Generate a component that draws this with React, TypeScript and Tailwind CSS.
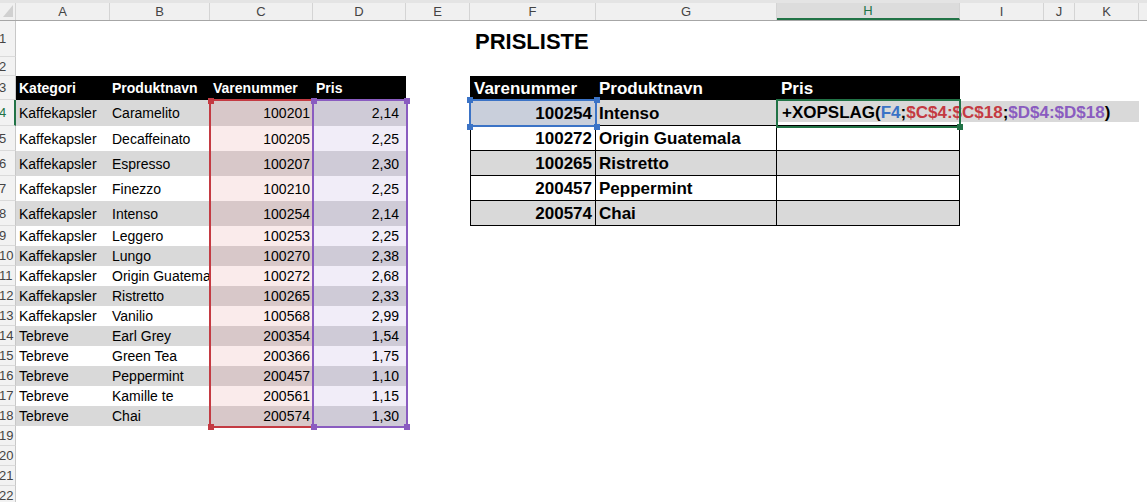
import React from "react";

type Col = { key: string; w: string };

const COLS: Col[] = [
  { key: "A", w: "w-[94px]" },
  { key: "B", w: "w-[100px]" },
  { key: "C", w: "w-[103px]" },
  { key: "D", w: "w-[93px]" },
  { key: "E", w: "w-[64px]" },
  { key: "F", w: "w-[126px]" },
  { key: "G", w: "w-[181px]" },
  { key: "H", w: "w-[183px]" },
  { key: "I", w: "w-[84px]" },
  { key: "J", w: "w-[31px]" },
  { key: "K", w: "w-[64px]" },
  { key: "L", w: "w-[120px]" },
];

const ROW_HEIGHTS = [
  "h-[36px]",
  "h-[19px]",
  "h-[24px]",
  "h-[26px]",
  "h-[25px]",
  "h-[25px]",
  "h-[25px]",
  "h-[25px]",
  ...Array.from({ length: 14 }, () => "h-[20px]"),
];

const PRODUCTS = [
  ["Kaffekapsler", "Caramelito", "100201", "2,14"],
  ["Kaffekapsler", "Decaffeinato", "100205", "2,25"],
  ["Kaffekapsler", "Espresso", "100207", "2,30"],
  ["Kaffekapsler", "Finezzo", "100210", "2,25"],
  ["Kaffekapsler", "Intenso", "100254", "2,14"],
  ["Kaffekapsler", "Leggero", "100253", "2,25"],
  ["Kaffekapsler", "Lungo", "100270", "2,38"],
  ["Kaffekapsler", "Origin Guatemala", "100272", "2,68"],
  ["Kaffekapsler", "Ristretto", "100265", "2,33"],
  ["Kaffekapsler", "Vanilio", "100568", "2,99"],
  ["Tebreve", "Earl Grey", "200354", "1,54"],
  ["Tebreve", "Green Tea", "200366", "1,75"],
  ["Tebreve", "Peppermint", "200457", "1,10"],
  ["Tebreve", "Kamille te", "200561", "1,15"],
  ["Tebreve", "Chai", "200574", "1,30"],
];

const LOOKUP = [
  ["100254", "Intenso"],
  ["100272", "Origin Guatemala"],
  ["100265", "Ristretto"],
  ["200457", "Peppermint"],
  ["200574", "Chai"],
];

const RED = "#c43a42";
const PURPLE = "#8a5cc0";

function ColumnHeaders() {
  return (
    <div className="flex h-[18px] border-b border-[#a6a6a6] bg-[#f0f0f0] text-[13px] text-[#444]">
      <div className="relative w-[16px] shrink-0 border-r border-[#d4d4d4]">
        <svg className="absolute left-0 top-0" width="16" height="17" viewBox="0 0 16 17">
          <polygon points="13,2 13,14 3,14" fill="#d0d0d0" />
        </svg>
      </div>
      {COLS.map((c) =>
        c.key === "H" ? (
          <div
            key={c.key}
            className={`${c.w} flex shrink-0 items-center justify-center border-b-2 border-r border-b-[#217346] border-r-[#d4d4d4] bg-[#dcdcdc] text-[#217346]`}
          >
            {c.key}
          </div>
        ) : (
          <div
            key={c.key}
            className={`${c.w} flex shrink-0 items-center justify-center border-r border-[#d4d4d4]`}
          >
            {c.key === "L" ? "" : c.key}
          </div>
        ),
      )}
    </div>
  );
}

function RowHead({ n }: { n: number }) {
  const active = n === 4;
  return (
    <div
      className={`flex w-[16px] shrink-0 items-center overflow-hidden border-b border-b-[#dadada] bg-[#f2f2f2] text-[13px] leading-none ${
        active ? "border-r-2 border-r-[#217346] text-[#217346]" : "border-r border-r-[#c8c8c8] text-[#444]"
      }`}
    >
      <span className="-ml-[1px]">{n}</span>
    </div>
  );
}

function Cell({ n, col, w }: { n: number; col: string; w: string }) {
  const base = `${w} shrink-0 flex whitespace-nowrap`;
  const gray = n % 2 === 0;

  if (n === 1 && col === "F") {
    return (
      <div className={`${base} items-end overflow-visible pb-[4px] pl-[5px] text-[22px] font-bold leading-none`}>
        PRISLISTE
      </div>
    );
  }

  // left price list
  if (n === 3 && ["A", "B", "C", "D"].includes(col)) {
    const label = { A: "Kategori", B: "Produktnavn", C: "Varenummer", D: "Pris" }[col];
    return (
      <div
        className={`${base} items-center bg-black text-[14px] font-bold text-white ${col === "B" ? "pl-[2px]" : "pl-[3px]"}`}
      >
        {label}
      </div>
    );
  }
  if (n >= 4 && n <= 18 && ["A", "B", "C", "D"].includes(col)) {
    const p = PRODUCTS[n - 4];
    if (col === "A")
      return (
        <div className={`${base} items-center pl-[3px] pt-[1px] text-[14px] ${gray ? "bg-[#d9d9d9]" : "bg-white"}`}>
          {p[0]}
        </div>
      );
    if (col === "B")
      return (
        <div
          className={`${base} items-center overflow-hidden pl-[2px] pt-[1px] text-[14px] ${gray ? "bg-[#d9d9d9]" : "bg-white"}`}
        >
          {p[1]}
        </div>
      );
    if (col === "C")
      return (
        <div
          className={`${base} items-center justify-end pr-[3px] pt-[1px] text-[14px] ${gray ? "bg-[#d8c8c9]" : "bg-[#faebeb]"}`}
        >
          {p[2]}
        </div>
      );
    return (
      <div
        className={`${base} items-center justify-end pr-[7px] pt-[1px] text-[14px] ${gray ? "bg-[#cfcbd7]" : "bg-[#f1edf8]"}`}
      >
        {p[3]}
      </div>
    );
  }

  // lookup table
  if (n === 3 && ["F", "G", "H"].includes(col)) {
    const label = { F: "Varenummer", G: "Produktnavn", H: "Pris" }[col];
    return (
      <div className={`${base} items-center bg-black pt-[1px] text-[17px] font-bold text-white ${col === "G" ? "pl-[3px]" : "pl-[4px]"}`}>
        {label}
      </div>
    );
  }
  if (n >= 4 && n <= 8 && ["F", "G", "H"].includes(col)) {
    const r = LOOKUP[n - 4];
    if (col === "F")
      return (
        <div
          className={`${base} items-center justify-end border-b border-l border-r border-black pr-[3px] pt-[2px] text-[17px] font-bold ${
            n === 4 ? "bg-[#c9cfdb]" : gray ? "bg-[#d9d9d9]" : "bg-white"
          }`}
        >
          {r[0]}
        </div>
      );
    if (col === "G")
      return (
        <div
          className={`${base} items-center border-b border-r border-black pl-[3px] pt-[2px] text-[17px] font-bold ${
            gray ? "bg-[#d9d9d9]" : "bg-white"
          }`}
        >
          {r[1]}
        </div>
      );
    return <div className={`${base} border-b border-r border-black ${n !== 4 && gray ? "bg-[#d9d9d9]" : "bg-white"}`} />;
  }

  return <div className={base} />;
}

function SheetRow({ n, h }: { n: number; h: string }) {
  return (
    <div className={`flex ${h}`}>
      <RowHead n={n} />
      {COLS.map((c) => (
        <Cell key={c.key} n={n} col={c.key} w={c.w} />
      ))}
    </div>
  );
}

function Handle({ className }: { className: string }) {
  return <div className={`absolute h-[6px] w-[6px] ${className}`} />;
}

export default function App() {
  return (
    <div className="relative h-[502px] w-[1147px] overflow-hidden bg-white font-['Liberation_Sans',Arial,sans-serif] text-black">
      <div className="h-[3px] bg-[#e4e4e4]" />
      <ColumnHeaders />
      {ROW_HEIGHTS.map((h, i) => (
        <SheetRow key={i} n={i + 1} h={h} />
      ))}

      {/* referenced ranges */}
      <div className="absolute left-[209px] top-[99px] h-[329px] w-[105px] border-2 border-[#c43a42]" />
      <div className="absolute left-[312px] top-[99px] h-[329px] w-[96px] border-2 border-[#8a5cc0]" />
      <Handle className="left-[208px] top-[98px] bg-[#c43a42]" />
      <Handle className="left-[208px] top-[424px] bg-[#c43a42]" />
      <Handle className="left-[311px] top-[98px] bg-[#8a5cc0]" />
      <Handle className="left-[404px] top-[98px] bg-[#8a5cc0]" />
      <Handle className="left-[311px] top-[424px] bg-[#8a5cc0]" />
      <Handle className="left-[404px] top-[424px] bg-[#8a5cc0]" />

      <div className="absolute left-[469px] top-[99px] h-[28px] w-[128px] border-2 border-[#3b73c6]" />
      <Handle className="left-[467px] top-[97px] bg-[#3b73c6]" />
      <Handle className="left-[594px] top-[97px] bg-[#3b73c6]" />
      <Handle className="left-[467px] top-[124px] bg-[#3b73c6]" />
      <Handle className="left-[594px] top-[124px] bg-[#3b73c6]" />

      {/* in-cell formula editor */}
      <div className="absolute left-[778px] top-[101px] flex h-[21px] w-[361px] items-center whitespace-nowrap bg-[#d9d9d9] pl-[4px] pt-[2px] text-[17px] font-bold">
        <span>+XOPSLAG(</span>
        <span className="text-[#3b73c6]">F4</span>
        <span>;</span>
        <span style={{ color: RED }}>$C$4:$C$18</span>
        <span>;</span>
        <span style={{ color: PURPLE }}>$D$4:$D$18</span>
        <span>)</span>
      </div>
      <div className="absolute left-[776px] top-[99px] h-[29px] w-[185px] border-2 border-[#217346]" />
      <Handle className="left-[957px] top-[124px] bg-[#217346]" />
    </div>
  );
}
